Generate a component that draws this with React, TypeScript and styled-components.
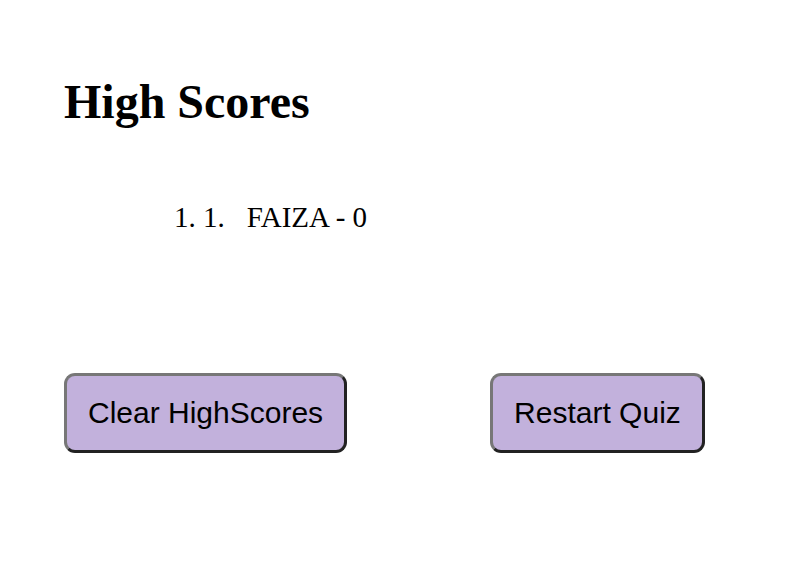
import React from "react";
import styled, { createGlobalStyle } from "styled-components";

const Global = createGlobalStyle`
  html, body { margin: 0; padding: 0; background: #ffffff; }
  body { font-family: "Liberation Serif", "Times New Roman", serif; color: #000; }
`;

const Page = styled.main`
  padding: 76px 0 0 64px;
`;

const Title = styled.h1`
  margin: 0;
  font-family: "Liberation Serif", "Times New Roman", serif;
  font-weight: bold;
  font-size: 48px;
  line-height: 52px;
`;

const ScoreList = styled.ol`
  margin: 73px 0 0 0;
  padding-left: 139px;
  font-size: 29px;
  line-height: 32px;
`;

const ScoreItem = styled.li``;

const Rank = styled.span`
  margin-right: 22px;
`;

const Actions = styled.div`
  display: flex;
  gap: 143px;
  margin-top: 140px;
`;

const ActionButton = styled.button`
  font-family: "Liberation Sans", Arial, sans-serif;
  font-size: 30px;
  line-height: 34px;
  color: #000;
  background: #c2b1dc;
  padding: 20px 21px;
  border: 3px solid;
  border-color: #777777 #222222 #222222 #777777;
  border-radius: 11px;
  cursor: pointer;
`;

export default function App() {
  return (
    <>
      <Global />
      <Page>
        <Title>High Scores</Title>
        <ScoreList>
          <ScoreItem>
            <Rank>1.</Rank>FAIZA - 0
          </ScoreItem>
        </ScoreList>
        <Actions>
          <ActionButton>Clear HighScores</ActionButton>
          <ActionButton>Restart Quiz</ActionButton>
        </Actions>
      </Page>
    </>
  );
}
